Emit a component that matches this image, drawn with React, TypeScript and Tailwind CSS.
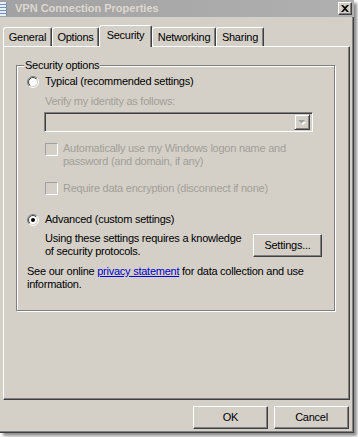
import React from 'react';

const tabs = [
  { label: 'General', w: 'w-[49px]' },
  { label: 'Options', w: 'w-[47px]' },
  { label: 'Security', w: 'w-[53px]', active: true },
  { label: 'Networking', w: 'w-[64px]' },
  { label: 'Sharing', w: 'w-[48px]' },
];

const Radio = ({ id, checked }: { id: string; checked?: boolean }) => (
  <svg width="12" height="12" viewBox="0 0 12 12" className="shrink-0">
    <defs>
      <linearGradient id={id + 'o'} x1="0" y1="0" x2="1" y2="1">
        <stop offset="0.5" stopColor="#808080" />
        <stop offset="0.5" stopColor="#ffffff" />
      </linearGradient>
      <linearGradient id={id + 'i'} x1="0" y1="0" x2="1" y2="1">
        <stop offset="0.5" stopColor="#404040" />
        <stop offset="0.5" stopColor="#d4d0c8" />
      </linearGradient>
    </defs>
    <circle cx="6" cy="6" r="5.5" fill="none" stroke={`url(#${id}o)`} />
    <circle cx="6" cy="6" r="4.5" fill="#ffffff" stroke={`url(#${id}i)`} />
    {checked && <circle cx="6" cy="6" r="2" fill="#000000" />}
  </svg>
);

const Checkbox = () => (
  <div className="w-[13px] h-[13px] shrink-0 border-t border-l border-[#a0a0a0] border-r border-b border-r-white border-b-white bg-[#d4d0c8] shadow-[inset_1px_1px_0_#d4d0c8]" />
);

const Button = ({ label, className }: { label: string; className?: string }) => (
  <div
    className={
      'flex items-center justify-center border-t border-l border-white border-r border-b border-r-[#404040] border-b-[#404040] shadow-[inset_-1px_-1px_0_#808080] bg-[#d4d0c8] text-black ' +
      (className || '')
    }
  >
    {label}
  </div>
);

const App = () => {
  return (
    <div className="w-[358px] h-[437px] bg-white font-['Liberation_Sans',Arial,sans-serif] text-[11px] leading-[13px] tracking-[-0.25px] text-black">
      <div className="relative w-[354px] h-[433px] bg-[#d4d0c8] flex flex-col shadow-[inset_-1px_-1px_0_#404040,inset_-2px_-2px_0_#808080,3px_3px_3px_rgba(0,0,0,0.45)]">
        {/* title bar */}
        <div className="h-[17px] flex items-center bg-gradient-to-r from-[#a2a2a2] to-[#b0b0b0]">
          <svg width="7" height="14" viewBox="0 0 7 14" className="shrink-0">
            <rect x="0" y="0" width="7" height="14" fill="#e8eef8" />
            <rect x="0" y="2" width="6" height="1" fill="#6f8fc0" />
            <rect x="0" y="5" width="6" height="1" fill="#6f8fc0" />
            <rect x="0" y="8" width="6" height="1" fill="#6f8fc0" />
            <rect x="0" y="11" width="6" height="1" fill="#6f8fc0" />
            <rect x="6" y="0" width="1" height="14" fill="#8090a8" />
          </svg>
          <span className="ml-[8px] font-bold text-[#dcd8d0] tracking-normal">VPN Connection Properties</span>
          <div className="ml-auto mr-[2px] w-[14px] h-[13px] flex items-center justify-center bg-[#d4d0c8] border-t border-l border-white border-r border-b border-r-[#404040] border-b-[#404040] shadow-[inset_-1px_-1px_0_#808080]">
            <svg width="8" height="7" viewBox="0 0 8 7">
              <path d="M0 0h2l2 2 2-2h2L5 3.5 8 7H6L4 5 2 7H0l3-3.5z" fill="#000" />
            </svg>
          </div>
        </div>

        {/* tabs */}
        <div className="mt-[8px] h-[21px] pl-[3px] flex items-end">
          {tabs.map((t) => (
            <div
              key={t.label}
              className={
                t.w +
                ' flex justify-center pt-[3px] border-t border-l border-white border-r border-r-[#404040] shadow-[inset_-1px_0_0_#808080] rounded-tl-[3px] rounded-tr-[2px] ' +
                (t.active ? 'h-[22px] -mb-[1px] relative z-10 bg-[#d4d0c8]' : 'h-[19px]')
              }
            >
              {t.label}
            </div>
          ))}
        </div>

        {/* panel */}
        <div className="ml-[3px] w-[347px] h-[354px] border-t border-l border-white border-r border-b border-r-[#404040] border-b-[#404040] shadow-[inset_-1px_-1px_0_#808080] pt-[18px] pl-[12px]">
          <div className="relative w-[319px] h-[246px] border border-[#808080] shadow-[inset_1px_1px_0_#fff,1px_1px_0_#fff] flex flex-col">
            <span className="absolute left-[7px] top-[-7px] px-[1px] bg-[#d4d0c8]">Security options</span>

            <div className="mt-[9px] ml-[10px] h-[13px] flex items-center gap-[6px]">
              <Radio id="r1" />
              <span>Typical (recommended settings)</span>
            </div>

            <div className="mt-[7px] ml-[28px] text-[#a19f97]">Verify my identity as follows:</div>

            <div className="mt-[4px] ml-[27px] w-[269px] h-[20px] flex justify-end items-center pr-[2px] border-t border-l border-[#808080] border-r border-b border-r-white border-b-white shadow-[inset_1px_1px_0_#404040,inset_-1px_-1px_0_#d4d0c8] bg-[#d4d0c8]">
              <div className="w-[16px] h-[16px] flex items-center justify-center border-t border-l border-[#d4d0c8] border-r border-b border-r-[#404040] border-b-[#404040] shadow-[inset_1px_1px_0_#fff,inset_-1px_-1px_0_#808080]">
                <svg width="8" height="5" viewBox="0 0 8 5">
                  <path d="M1 1h6L4 4z" fill="#ffffff" transform="translate(1 1)" />
                  <path d="M0 0h7L3.5 3.5z" fill="#a0a0a0" />
                </svg>
              </div>
            </div>

            <div className="mt-[10px] ml-[28px] flex gap-[5px] text-[#a19f97]">
              <div className="pt-[1px]">
                <Checkbox />
              </div>
              <div>
                Automatically use my Windows logon name and
                <br />
                password (and domain, if any)
              </div>
            </div>

            <div className="mt-[14px] ml-[28px] flex gap-[5px] text-[#a19f97]">
              <Checkbox />
              <div>Require data encryption (disconnect if none)</div>
            </div>

            <div className="mt-[18px] ml-[10px] h-[13px] flex items-center gap-[6px]">
              <Radio id="r2" checked />
              <span>Advanced (custom settings)</span>
            </div>

            <div className="mt-[6px] ml-[28px] flex">
              <div className="w-[208px]">
                Using these settings requires a knowledge
                <br />
                of security protocols.
              </div>
              <Button label="Settings..." className="mt-[2px] w-[69px] h-[23px]" />
            </div>

            <div className="mt-[7px] ml-[10px]">
              See our online <span className="text-[#0000cc] underline">privacy statement</span> for data collection and use
              <br />
              information.
            </div>
          </div>
        </div>

        {/* buttons */}
        <div className="mt-[6px] pr-[5px] flex justify-end gap-[6px]">
          <Button label="OK" className="w-[75px] h-[23px]" />
          <Button label="Cancel" className="w-[75px] h-[23px]" />
        </div>
      </div>
    </div>
  );
};

export default App;
